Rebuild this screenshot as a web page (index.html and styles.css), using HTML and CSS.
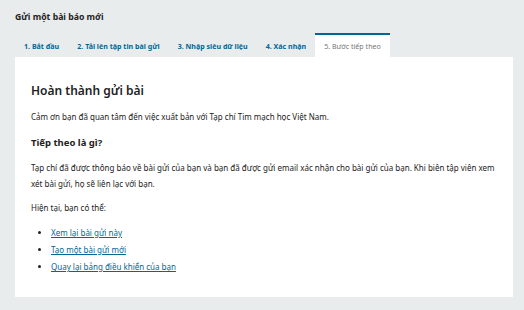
FILE: index.html
```html
<!DOCTYPE html>
<html lang="vi">
<head>
<meta charset="UTF-8" />
<title>Gửi một bài báo mới</title>
<link rel="stylesheet" href="styles.css">
</head>
<body>

<div class="page">
  <h1 class="page-title">Gửi một bài báo mới</h1>

  <ul class="steps">
    <li><a href="#start">1. Bắt đầu</a></li>
    <li><a href="#upload">2. Tải lên tập tin bài gửi</a></li>
    <li><a href="#metadata">3. Nhập siêu dữ liệu</a></li>
    <li><a href="#confirm">4. Xác nhận</a></li>
    <li class="current"><a href="#next">5. Bước tiếp theo</a></li>
  </ul>

  <div class="panel">
    <h2>Hoàn thành gửi bài</h2>
    <p>Cảm ơn bạn đã quan tâm đến việc xuất bản với Tạp chí Tim mạch học Việt Nam.</p>

    <h3>Tiếp theo là gì?</h3>
    <p>Tạp chí đã được thông báo về bài gửi của bạn và bạn đã được gửi email xác nhận cho bài gửi của bạn. Khi biên tập viên xem xét bài gửi, họ sẽ liên lạc với bạn.</p>

    <p class="lead">Hiện tại, bạn có thể:</p>
    <ul class="actions">
      <li><a href="#review">Xem lại bài gửi này</a></li>
      <li><a href="#new">Tạo một bài gửi mới</a></li>
      <li><a href="#dashboard">Quay lại bảng điều khiển của bạn</a></li>
    </ul>
  </div>
</div>

</body>
</html>
```

FILE: styles.css
```css
/* Reset and base */
* {
  box-sizing: border-box;
  margin: 0;
  padding: 0;
}
body {
  font-family: 'Noto Sans', 'Open Sans', sans-serif;
  background: #e9ecec;
  color: #222;
  font-size: 8px;
}

.page {
  padding: 0 11px 13px 15px;
}

/* Page title */
.page-title {
  font-size: 8.7px;
  font-weight: 700;
  line-height: 12px;
  padding-top: 11px;
  height: 33px;
}

/* Wizard steps */
.steps {
  display: flex;
  list-style: none;
  height: 24px;
}
.steps li {
  display: flex;
}
.steps a {
  display: flex;
  align-items: center;
  padding: 0 9px;
  font-size: 7.1px;
  font-weight: 700;
  color: #006798;
  text-decoration: none;
  border-top: 2px solid transparent;
}
.steps .current a {
  background: #fff;
  color: #777;
  font-weight: 400;
  border-top-color: #006798;
}

/* Main panel */
.panel {
  background: #fff;
  padding: 25px 16px 17px;
  height: 240px;
}
.panel h2 {
  font-size: 12px;
  font-weight: 600;
  line-height: 18px;
  margin-bottom: 9px;
}
.panel h3 {
  font-size: 9.5px;
  font-weight: 700;
  line-height: 14px;
  margin: 11px 0 10px;
}
.panel p {
  line-height: 16px;
  margin-bottom: 8px;
}

.actions {
  padding-left: 20px;
  margin-top: 7px;
}
.actions li {
  line-height: 17px;
}
.actions a {
  color: #006798;
}
```
